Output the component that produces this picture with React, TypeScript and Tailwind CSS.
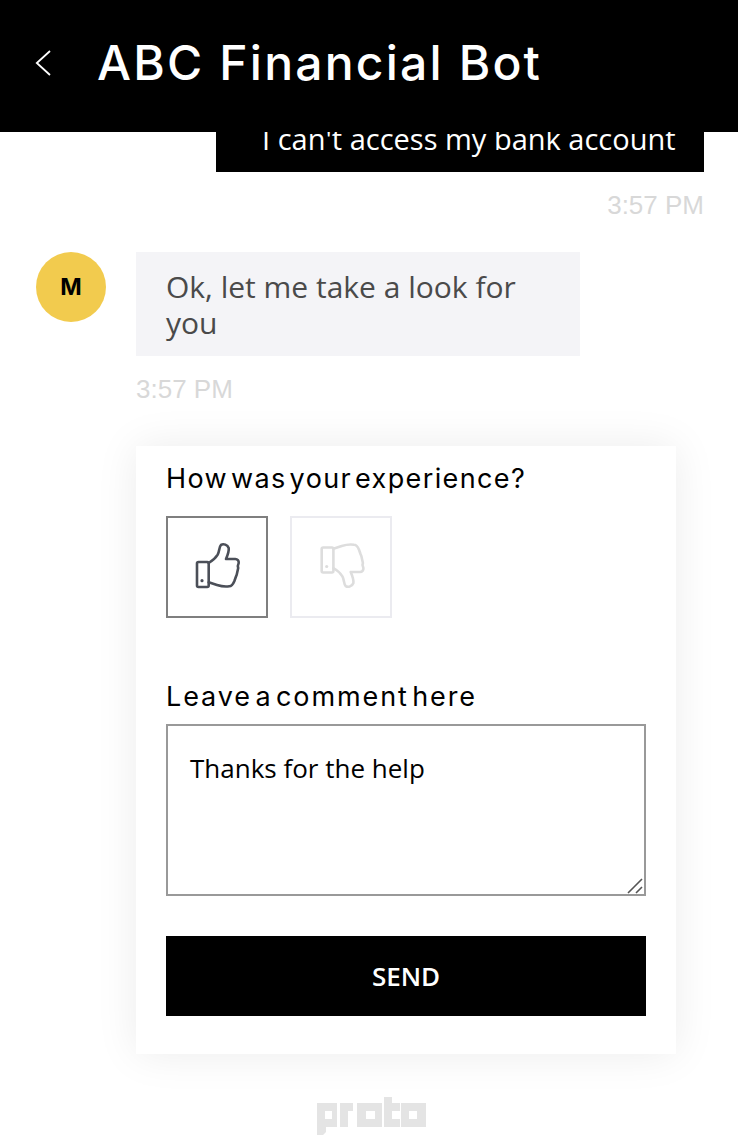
import React from 'react';

const HAND = 'M12.7 19C16 17 19.7 14 21.7 10.7 23.5 7.5 23 3 25 .9 27.5-.7 31.5 .8 32.7 4 33.2 7.5 31.5 11.5 30 15H39.3C41.5 15 42.9 16.8 42.7 19L41.8 22 42.2 24 40.7 30.7 39.8 33 38.3 37.3C37 40.5 35.5 42.3 33.3 42.3 29 43 25 42.3 21 41L12.7 38.3';

const ThumbUp = () => (
  <svg viewBox="-1 1 44 44" fill="none" stroke="currentColor" strokeWidth="2.6" strokeLinecap="round" strokeLinejoin="round" className="w-[44px] h-[44px] overflow-visible text-[#4b4f58]">
    <rect x="1" y="18" width="11.7" height="25" rx="1.5" />
    <circle cx="6" cy="36.7" r="1.6" fill="currentColor" stroke="none" />
    <path d={HAND} />
  </svg>
);

const ThumbDown = () => (
  <svg viewBox="-1.7 1 44 44" fill="none" stroke="currentColor" strokeWidth="2.6" strokeLinecap="round" strokeLinejoin="round" className="w-[44px] h-[44px] overflow-visible text-[#dddddd]">
    <rect x="1" y="3.5" width="11.7" height="25" rx="1.5" />
    <circle cx="6" cy="22.5" r="1.6" fill="currentColor" stroke="none" />
    <path d={HAND} transform="matrix(1 0 0 -1 0 43)" />
  </svg>
);

const Logo = () => (
  <svg viewBox="0 0 110 38" className="w-[110px] h-[38px] text-[#e4e4e4]" fill="currentColor">
    <path fillRule="evenodd" d="M0 6h20v24H9v5l-3 3H0zM8 14v8h7v-8z" />
    <path d="M23 6h13v8h-5v16h-8z" />
    <path fillRule="evenodd" d="M40 6h25v24H40zM49 14v8h9v-8z" />
    <path d="M67 0h8v6h8v8h-8v8h8v8H67z" />
    <path fillRule="evenodd" d="M84 6h25v24H84zM92 14v8h8v-8z" />
  </svg>
);

export default function App() {
  return (
    <div className="w-[738px] h-[1148px] overflow-hidden bg-white font-['Open_Sans',sans-serif]">
      <header className="relative z-10 h-[132px] bg-black flex items-center pl-[35px] text-white">
        <svg viewBox="0 0 16 26" fill="none" stroke="currentColor" strokeWidth="1.8" className="w-[16px] h-[26px] -mt-[6px]">
          <path d="M15 1 1.8 13 15 25" />
        </svg>
        <h1 className="ml-[46px] -mt-[6px] font-['Inter',sans-serif] text-[48px] font-medium leading-none tracking-[2.2px]">ABC Financial Bot</h1>
      </header>

      <div className="flex flex-col items-end pr-[34px] -mt-[32px]">
        <div className="bg-black text-white text-[29px] leading-[38px] w-[488px] pt-[20px] pb-[14px] pl-[46px]">I can't access my bank account</div>
        <div className="mt-[18px] font-['Liberation_Sans',sans-serif] text-[26px] leading-[30px] text-[#d8d8d8]">3:57 PM</div>
      </div>

      <div className="flex mt-[32px] pl-[36px]">
        <div className="w-[70px] h-[70px] rounded-full bg-[#f2cb4e] flex items-center justify-center font-['Inter',sans-serif] font-bold text-[23px] text-black">M</div>
        <div className="ml-[30px] w-[444px] bg-[#f4f4f7] px-[30px] pt-[17px] pb-[15px] text-[30px] leading-[36px] text-[#4a4a4a]">Ok, let me take a look for you</div>
      </div>
      <div className="ml-[136px] mt-[18px] font-['Liberation_Sans',sans-serif] text-[26px] leading-[30px] text-[#d8d8d8]">3:57 PM</div>

      <section className="ml-[136px] mt-[42px] w-[540px] h-[608px] bg-white px-[30px] pt-[15px] shadow-[0_0_40px_rgba(0,0,0,0.08)]">
        <p className="font-['Inter',sans-serif] text-[27px] leading-[36px] tracking-[1.38px] text-black [word-spacing:-6px]">How was your experience?</p>
        <div className="flex gap-[22px] mt-[19px]">
          <div className="w-[102px] h-[102px] border-2 border-[#7f7f7f] flex items-center justify-center">
            <ThumbUp />
          </div>
          <div className="w-[102px] h-[102px] border-2 border-[#ebebf0] flex items-center justify-center">
            <ThumbDown />
          </div>
        </div>
        <p className="mt-[61px] font-['Inter',sans-serif] text-[27px] leading-[36px] tracking-[1.9px] text-black [word-spacing:-6px]">Leave a comment here</p>
        <div className="relative mt-[9px] w-[480px]">
          <textarea
            defaultValue="Thanks for the help"
            className="block w-[480px] h-[172px] resize-none border-2 border-[#999999] px-[22px] py-[24px] text-[26px] leading-[36px] text-black outline-none"
          />
          <svg viewBox="0 0 16 16" fill="none" stroke="#555555" strokeWidth="1.6" className="absolute right-[3px] bottom-[2px] w-[16px] h-[16px]">
            <path d="M1 15 15 1M9 15l6-6" />
          </svg>
        </div>
        <button className="mt-[40px] w-[480px] h-[80px] bg-black text-white text-[26px] font-semibold">SEND</button>
      </section>

      <div className="flex justify-center ml-[6px] mt-[43px]">
        <Logo />
      </div>
    </div>
  );
}
